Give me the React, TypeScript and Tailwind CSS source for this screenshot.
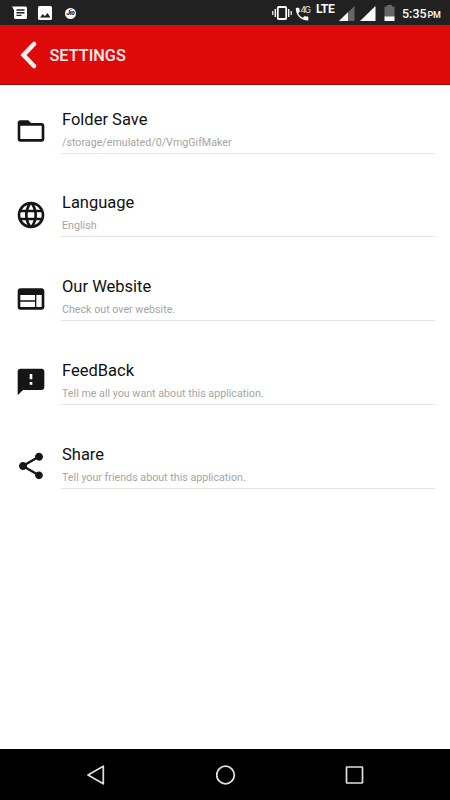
import type { IconType } from "react-icons";
import { MdFeedback, MdFolderOpen, MdLanguage, MdShare, MdWeb } from "react-icons/md";

type SettingsItem = {
  title: string;
  description: string;
  icon: IconType;
};

const items: SettingsItem[] = [
  { title: "Folder Save", description: "/storage/emulated/0/VmgGifMaker", icon: MdFolderOpen },
  { title: "Language", description: "English", icon: MdLanguage },
  { title: "Our Website", description: "Check out over website.", icon: MdWeb },
  { title: "FeedBack", description: "Tell me all you want about this application.", icon: MdFeedback },
  { title: "Share", description: "Tell your friends about this application.", icon: MdShare },
];

function StatusBar() {
  return (
    <div className="flex h-[25px] items-start justify-between bg-[#212121] pl-3 pr-[9px] text-white">
      <div className="flex h-full items-center pt-px">
        <svg width="16" height="14" viewBox="0 0 16 14">
          <path d="M0 .5h13.500a1.500 1.500 0 0 1 1.500 1.500v9.500a1.500 1.500 0 0 1-1.500 1.500h-10A1.500 1.500 0 0 1 2 11.500V4z" fill="currentColor" />
          <path d="M4.500 4h8M4.500 6.700h8M4.500 9.400h5" stroke="#212121" strokeWidth="1.400" />
        </svg>
        <svg className="ml-2.5" width="14" height="14" viewBox="0 0 14 14">
          <rect width="14" height="14" rx="1.500" fill="currentColor" />
          <path d="M2 11.500l2.800-3.500 2 2.200L9.500 7 12.500 11.500z" fill="#212121" />
        </svg>
        <div className="ml-[13px] flex h-[11px] w-[11px] items-center justify-center rounded-full bg-white text-[6.500px] font-black italic leading-none tracking-tighter text-[#212121]">
          Jio
        </div>
      </div>

      <div className="flex items-start">
        <svg className="mt-1.5" width="20" height="14" viewBox="0 0 20 14" fill="none" stroke="currentColor">
          <rect x="5.800" y="1" width="8.400" height="12" rx="1" strokeWidth="1.800" />
          <path d="M3.300 3v8M16.700 3v8" strokeWidth="1.400" />
          <path d="M.8 5v4M19.200 5v4" strokeWidth="1.200" />
        </svg>
        <svg className="ml-[3px] mt-[5px]" width="17" height="17" viewBox="0 0 17 17">
          <path
            d="M.8 3.500C.8 3 1.200 2.700 1.600 2.700h2c.5 0 .8.300.8.800 0 .9.200 1.700.4 2.500.1.300 0 .6-.2.800L3.200 8.200c1 2 2.600 3.600 4.600 4.600l1.400-1.400c.2-.2.500-.3.800-.2.800.3 1.700.4 2.600.4.500 0 .8.400.8.800v2.200c0 .5-.4.900-.8.900C6.100 15.500.8 10.200.8 3.500z"
            fill="currentColor"
          />
          <text x="5.600" y="7.500" fontSize="9.500" fontFamily="Roboto, sans-serif" fill="#e0e0e0" textLength="10.500">
            4G
          </text>
        </svg>
        <span className="ml-1 mt-[3px] w-[19px] text-[12px] font-bold leading-[13px] tracking-[-0.3px]">LTE</span>
        <svg className="ml-[4px] mt-[6px]" width="16" height="15" viewBox="0 0 16 15">
          <path d="M15.500 0v15H0z" fill="#666666" />
          <path d="M9 6.300V15H0z" fill="currentColor" />
        </svg>
        <svg className="ml-[5px] mt-[6px]" width="16" height="15" viewBox="0 0 16 15">
          <path d="M15.500 0v15H0z" fill="currentColor" />
        </svg>
        <svg className="ml-2 mt-[5px]" width="11" height="16" viewBox="0 0 11 16">
          <path d="M3 0h5v1.500h2.500V12H.5V1.500H3z" fill="#666666" />
          <path d="M.5 11.500h10V16H.5z" fill="currentColor" />
        </svg>
        <div className="ml-[7px] mt-[7px] flex w-[39px] items-baseline whitespace-nowrap font-medium leading-[14px]">
          <span className="text-[12.500px]">5:35</span>
          <span className="ml-px text-[9px] tracking-[-0.3px]">PM</span>
        </div>
      </div>
    </div>
  );
}

function Header() {
  return (
    <header className="flex h-[60px] items-center border-b border-[#a00808] bg-[#de0909] pl-5 text-[#ffeeee]">
      <svg width="17" height="28" viewBox="0 0 17 28" fill="none" stroke="currentColor" strokeWidth="4.500">
        <path d="M14 3L3.500 14 14 25" strokeLinecap="round" />
      </svg>
      <h1 className="ml-[12.500px] mt-[2px] text-[16.300px] font-medium leading-5">SETTINGS</h1>
    </header>
  );
}

function SettingsRow({ title, description, icon: Icon }: SettingsItem) {
  return (
    <li className="flex h-[83.750px] items-start pl-[15px] pr-[15px]">
      <Icon className="mt-[30px] h-8 w-8 shrink-0 text-[#151515]" />
      <div className="ml-[14px] flex h-[68.700px] flex-1 flex-col border-b border-[#e6e6e6] pl-px">
        <h2 className="mt-[24.700px] text-[16.500px] leading-5 text-[#111111]">{title}</h2>
        <p className="mt-[6px] text-[10.700px] leading-[14px] text-[#a5a5a5]">{description}</p>
      </div>
    </li>
  );
}

function NavigationBar() {
  return (
    <nav className="flex h-[51px] items-center justify-between bg-black pl-[86px] pr-[85px] text-[#e0e0e0]">
      <svg width="20" height="20" viewBox="0 0 20 20" fill="none" stroke="currentColor" strokeWidth="1.700">
        <path d="M17.300 1.200v17.600L2 10z" strokeLinejoin="round" />
      </svg>
      <svg width="20" height="20" viewBox="0 0 20 20" fill="none" stroke="currentColor" strokeWidth="1.800">
        <circle cx="9.500" cy="10" r="8.800" />
      </svg>
      <svg width="20" height="20" viewBox="0 0 20 20" fill="none" stroke="currentColor" strokeWidth="1.700">
        <rect x="1.500" y="2" width="16" height="16" rx=".5" />
      </svg>
    </nav>
  );
}

export default function App() {
  return (
    <div className="flex h-[800px] w-[450px] flex-col overflow-hidden bg-white font-['Roboto',sans-serif]">
      <StatusBar />
      <Header />
      <ul className="flex-1">
        {items.map((item) => (
          <SettingsRow key={item.title} {...item} />
        ))}
      </ul>
      <NavigationBar />
    </div>
  );
}
